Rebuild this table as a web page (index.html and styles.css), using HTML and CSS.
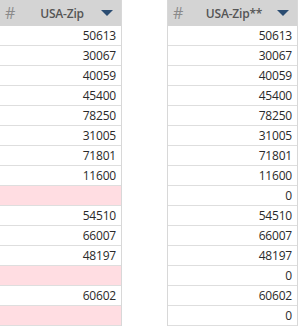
FILE: index.html
```html
<!DOCTYPE html>
<html>
<head><meta charset="utf-8"><link rel="stylesheet" href="styles.css"></head>
<body>
<div class="wrap">
  <div class="tbl left">
    <div class="hdr"><span class="hash">#</span><span class="title">USA-Zip</span><span class="tri"></span></div>
    <div class="row">50613</div>
    <div class="row">30067</div>
    <div class="row">40059</div>
    <div class="row">45400</div>
    <div class="row">78250</div>
    <div class="row">31005</div>
    <div class="row">71801</div>
    <div class="row">11600</div>
    <div class="row bad"></div>
    <div class="row">54510</div>
    <div class="row">66007</div>
    <div class="row">48197</div>
    <div class="row bad"></div>
    <div class="row">60602</div>
    <div class="row bad"></div>
  </div>
  <div class="tbl right">
    <div class="hdr"><span class="hash">#</span><span class="title">USA-Zip**</span><span class="tri"></span></div>
    <div class="row">50613</div>
    <div class="row">30067</div>
    <div class="row">40059</div>
    <div class="row">45400</div>
    <div class="row">78250</div>
    <div class="row">31005</div>
    <div class="row">71801</div>
    <div class="row">11600</div>
    <div class="row">0</div>
    <div class="row">54510</div>
    <div class="row">66007</div>
    <div class="row">48197</div>
    <div class="row">0</div>
    <div class="row">60602</div>
    <div class="row">0</div>
  </div>
</div>
</body>
</html>
```
FILE: styles.css
```css
html, body { margin: 0; padding: 0; background: #fff; }
body { font-family: "Open Sans", "Noto Sans", sans-serif; color: #333; }
.wrap { display: flex; width: 298px; height: 326px; overflow: hidden; }
.tbl { display: flex; flex-direction: column; box-sizing: border-box; }
.left { width: 122px; border-right: 1px solid #d8d8d8; }
.right { width: 131px; margin-left: 45px; border-left: 1px solid #d8d8d8; border-right: 1px solid #d8d8d8; }
.hdr { height: 26px; background: #d4d4d4; display: flex; align-items: center; box-sizing: border-box; padding: 0 8px 0 5px; }
.hash { font-family: "Open Sans", sans-serif; font-size: 16px; color: #8a8a8a; width: 18px; }
.title { flex: 1; text-align: center; font-size: 12px; font-weight: 600; color: #555; letter-spacing: -0.2px; }
.tri { width: 0; height: 0; border-left: 6px solid transparent; border-right: 6px solid transparent; border-top: 6px solid #2b4d72; }
.row { height: 20px; box-sizing: border-box; border-bottom: 1px solid #dedede; text-align: right; font-size: 12px; line-height: 19px; padding-right: 5px; color: #2a2a2a; letter-spacing: -0.2px; }
.bad { background: #ffdde2; }
```
